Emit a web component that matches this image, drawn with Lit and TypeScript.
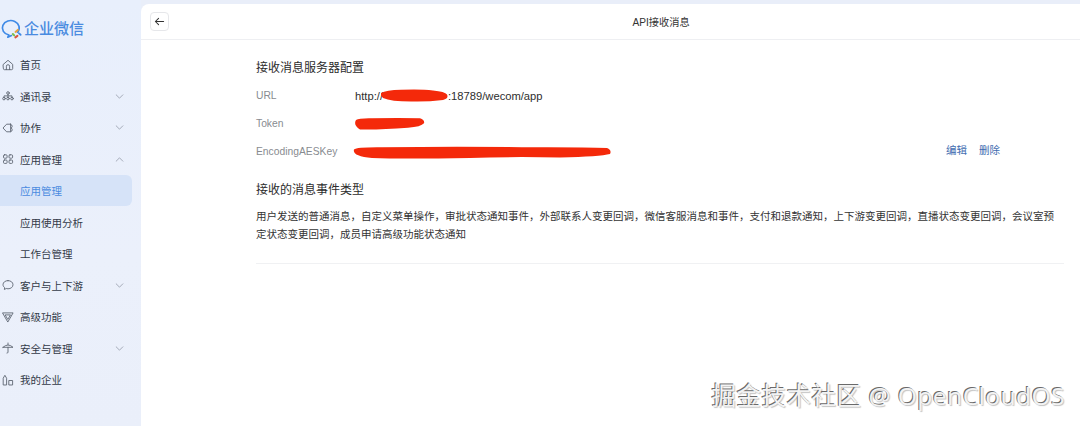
import { LitElement, html, css, svg } from "lit";
import { customElement } from "lit/decorators.js";

const s = (inner: unknown) => html`<svg class="ic" viewBox="0 0 12 12" fill="none" stroke="#5f6673" stroke-width=".9" stroke-linecap="round" stroke-linejoin="round">${inner}</svg>`;
const icons: Record<string, unknown> = {
  home: s(svg`<path d="M1.3 5.4 6 1.3l4.7 4.1v4.1q0 1.2-1.2 1.2h-7q-1.2 0-1.2-1.2ZM4.4 10.6V7.2q0-1.5 1.6-1.5t1.6 1.5v3.4"/>`),
  org: s(svg`<circle cx="6" cy="3" r="1.3"/><circle cx="2" cy="8.6" r="1.3"/><circle cx="6" cy="8.6" r="1.3"/><circle cx="10" cy="8.6" r="1.3"/><path d="M2 7V5.9h8V7M6 4.4v2.8"/>`),
  collab: s(svg`<path d="M8.4 2.2H4.6L1 6l3.6 3.8h3.8"/><path d="M8.6 2.2q1.6.6 1.6 2.2-.1 1.1-1.2 1.6 1.2.5 1.2 1.7 0 1.6-1.6 2.1V2.2Z"/>`),
  apps: s(svg`<rect x="1.5" y="1.8" width="3.6" height="3.4" rx="1"/><rect x="7" y="1.8" width="3.6" height="3.4" rx="1"/><rect x="1.5" y="7" width="3.6" height="3.4" rx="1"/><rect x="7" y="7" width="3.6" height="3.4" rx="1"/>`),
  chat: s(svg`<path d="M6 1.6c2.8 0 5 1.7 5 4.1S8.8 9.800 6 9.800c-.7 0-1.300-.1-1.800-.3L2.400 10.500l.2-1.900C1.600 7.800 1 6.800 1 5.700 1 3.300 3.200 1.600 6 1.600Z"/>`),
  adv: s(svg`<path d="M.9 1.900h10.200L6 10.700Z"/><path d="M3.500 3.900h5L6 8.100Z"/>`),
  safe: s(svg`<path d="M1 5.300Q6 .6 11 5.300H1ZM6 5.300v4.900q0 .9-1 .9"/><path d="M6 1v1.600"/>`),
  ent: s(svg`<path d="M1.200 10.600V4.200L2.900 1.300 4.600 4.200v6.400ZM6.800 10.600V6.500h3.800v4.100Z"/>`),
};
const chev = (up: boolean) => html`<svg class="chev" viewBox="0 0 10 6" fill="none" stroke="#8d94a3" stroke-width=".9" stroke-linecap="round" stroke-linejoin="round"><path d="${up ? "M1 5 5 1l4 4" : "M1 1l4 4 4-4"}"/></svg>`;

const nav: { k?: string; t: string; c?: "up" | "down"; sub?: boolean; on?: boolean }[] = [
  { k: "home", t: "首页" },
  { k: "org", t: "通讯录", c: "down" },
  { k: "collab", t: "协作", c: "down" },
  { k: "apps", t: "应用管理", c: "up" },
  { t: "应用管理", sub: true, on: true },
  { t: "应用使用分析", sub: true },
  { t: "工作台管理", sub: true },
  { k: "chat", t: "客户与上下游", c: "down" },
  { k: "adv", t: "高级功能" },
  { k: "safe", t: "安全与管理", c: "down" },
  { k: "ent", t: "我的企业" },
];

@customElement("app-root")
export class AppRoot extends LitElement {
  static styles = css`
    :host { display: block; width: 1080px; height: 426px; overflow: hidden; position: relative;
      font-family: "Liberation Sans", "Noto Sans CJK SC", sans-serif; background: #e9eef9; color: #333; }
    .page { display: flex; height: 426px; }
    aside { width: 141px; flex: none; background: linear-gradient(180deg, #e8effc, #ebf0fb 60%, #eaeffa); }
    .logo { height: 48.75px; display: flex; align-items: flex-start; gap: 2px; box-sizing: border-box; padding-top: 18px; }
    .logo svg { width: 22px; height: 22px; flex: none; }
    .logo span { font-size: 15px; line-height: 22px; font-weight: 500; color: #4a8be0; letter-spacing: 0; }
    .rows { display: flex; flex-direction: column; }
    .row { height: 31.5px; display: flex; align-items: center; padding-left: 2px; font-size: 10.5px; color: #333a48; position: relative; }
    .ic { width: 12px; height: 12px; flex: none; margin-right: 6px; }
    .chev { width: 9px; height: 5px; position: absolute; left: 114.5px; top: 13.5px; }
    .sub { padding-left: 20px; }
    .on { color: #4a8be0; }
    .on::before { content: ""; position: absolute; left: 0; right: 9px; top: 0; height: 31px; background: #d6e3f8; border-radius: 0 6px 6px 0; z-index: 0; }
    .on span { position: relative; }
    main { flex: 1; margin-top: 4px; background: #fff; border-radius: 8px 0 0 0; min-width: 0; }
    header { height: 36px; border-bottom: 1px solid #eeeff2; display: flex; align-items: center; justify-content: center; position: relative; box-sizing: border-box; font-size: 10.2px; color: #333; padding-left: 101px; }
    .back { position: absolute; left: 9px; top: 8px; width: 19px; height: 19px; box-sizing: border-box; border: 1px solid #e6e7ea; border-radius: 4px; display: flex; align-items: center; justify-content: center; }
    .back svg { width: 11px; height: 11px; }
    .content { padding: 20px 16px 0 115px; }
    h2 { margin: 0; font-size: 12px; line-height: 16px; font-weight: 400; color: #2c2c2c; }
    .kv { display: flex; align-items: center; height: 28px; font-size: 10.3px; }
    .kv label { width: 99px; color: #888b90; flex: none; }
    .kv .v { color: #2e2e2e; flex: 1; display: flex; align-items: center; font-size: 11.2px; }
    .blob { display: block; flex: none; }
    .b1 { margin-left: -2px; }
    .b2 { margin-left: -1px; }
    .b3 { margin-left: -3px; }
    .grow { flex: 1; }
    .acts { display: flex; gap: 12px; color: #3f6cb0; font-size: 10.5px; margin-right: 64px; margin-bottom: 4px; }
    .fields { margin-top: 5.5px; }
    .sec2 { margin-top: 16.5px; }
    p { margin: 10px 0 0; font-size: 10.5px; line-height: 17.5px; color: #333; padding-bottom: 20px; border-bottom: 1px solid #f0f1f3; }
    .wm { position: absolute; right: 15px; top: 379px; font-size: 24.5px; line-height: 34px; letter-spacing: .5px; color: #f3f3f3; white-space: nowrap;
      font-family: "Open Sans", "Noto Sans CJK SC", sans-serif;
      text-shadow: -1px -1px 0 #6a6a6a, 1px 1px 1px #c4c4c4; }
  `;

  render() {
    return html`<div class="page">
      <aside>
        <div class="logo">
          <svg viewBox="0 0 24 24" fill="none">
            <path d="M19.200 15.500a9.200 8 0 1 0-9.500 3.100l-1.200 2.300 4-1.800" stroke="#3f8ae6" stroke-width="1.800" stroke-linecap="round" stroke-linejoin="round"/>
            <path d="M17 15.200l2.400-2.200" stroke="#e9a23b" stroke-width="2.200" stroke-linecap="round"/>
            <path d="M20.500 16.500l2 1.800" stroke="#3f8ae6" stroke-width="2" stroke-linecap="round"/>
            <path d="M19 19.500l-2.200 1.600" stroke="#d9553f" stroke-width="2.200" stroke-linecap="round"/>
            <path d="M15.500 19l-1.500-1.600" stroke="#7cbf4b" stroke-width="2.200" stroke-linecap="round"/>
          </svg>
          <span>企业微信</span>
        </div>
        <div class="rows">
          ${nav.map((n) => html`<div class="row ${n.sub ? "sub" : ""} ${n.on ? "on" : ""}">
            ${n.k ? icons[n.k] : ""}<span>${n.t}</span>${n.c ? chev(n.c === "up") : ""}
          </div>`)}
        </div>
      </aside>
      <main>
        <header>
          <div class="back"><svg viewBox="0 0 12 12" fill="none" stroke="#333" stroke-width="1.100" stroke-linecap="round" stroke-linejoin="round"><path d="M10.500 6h-9M5 2.500 1.500 6 5 9.500"/></svg></div>
          API接收消息
        </header>
        <div class="content">
          <h2>接收消息服务器配置</h2>
          <div class="fields">
            <div class="kv"><label>URL</label><div class="v">http://<svg class="blob b1" width="67" height="14" viewBox="0 0 67 14"><path d="M0 4Q5 1 20 .8 40 0 52 1.500q12 1 14 4 2 4-4 5.500-16 2-32 1.500Q10 12.500 2 9-1 6 0 4Z" fill="#f4290a"/></svg>:18789/wecom/app</div></div>
            <div class="kv"><label>Token</label><div class="v"><svg class="blob b2" width="72" height="14" viewBox="0 0 72 14"><path d="M2 3Q5 1 18 1.300 45 .5 66 1.300q5 1.700 4 5-3 3.500-16 4.500Q25 13 6 12.500-1 8 2 3Z" fill="#f4290a"/></svg></div></div>
            <div class="kv"><label>EncodingAESKey</label><div class="v"><svg class="blob b3" width="260" height="14" viewBox="0 0 260 14"><path d="M2 4.500Q5 2 30 2.300 110 1 170 2.300 230 2 255 3q5 2 3 6-10 2.500-50 3.500-50-1-90 .5Q50 14 20 13 0 11 2 4.500Z" fill="#f4290a"/></svg><div class="grow"></div><div class="acts"><span>编辑</span><span>删除</span></div></div></div>
          </div>
          <h2 class="sec2">接收的消息事件类型</h2>
          <p>用户发送的普通消息，自定义菜单操作，审批状态通知事件，外部联系人变更回调，微信客服消息和事件，支付和退款通知，上下游变更回调，直播状态变更回调，会议室预定状态变更回调，成员申请高级功能状态通知</p>
        </div>
      </main>
    </div>
    <div class="wm">掘金技术社区 @ OpenCloudOS</div>`;
  }
}
